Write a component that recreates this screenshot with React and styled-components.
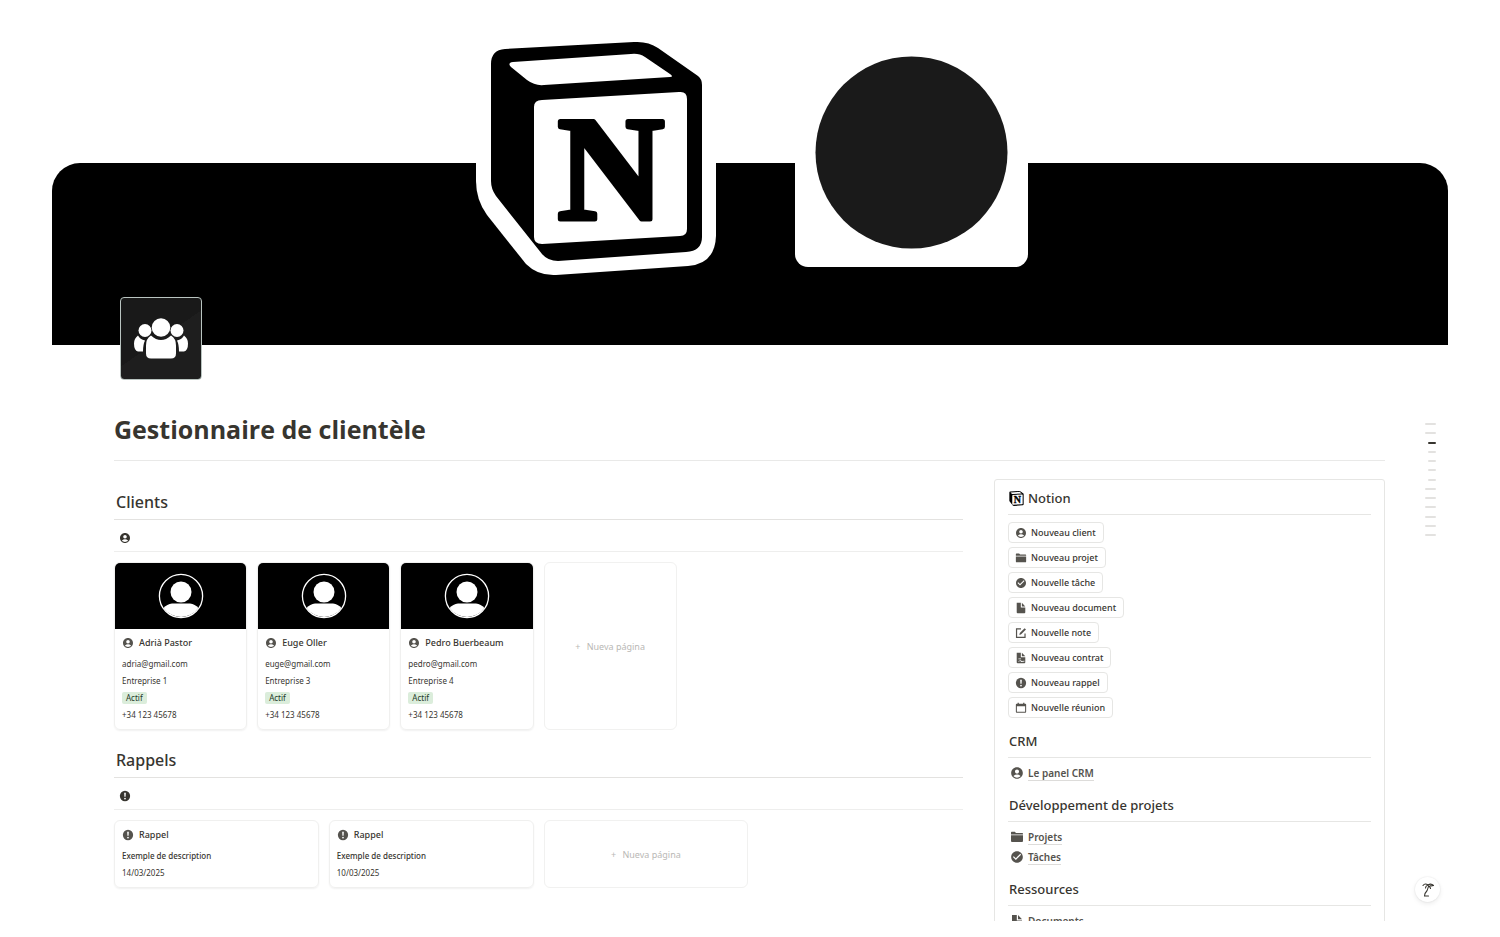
import React from "react";
import styled, { createGlobalStyle } from "styled-components";
import { MdAccountCircle, MdCheckCircle } from "react-icons/md";

const GlobalStyle = createGlobalStyle`
  * {
    box-sizing: border-box;
  }

  body {
    margin: 0;
    background: #fff;
    color: #37352f;
    font-family: "Noto Sans", "Open Sans", sans-serif;
  }

  h1, h2, h3, p {
    margin: 0;
  }
`;

const Page = styled.main`
  height: calc(100vh - 16px);
  min-height: 600px;
  overflow: hidden;
  padding: 163px 52px 0;
`;

const Cover = styled.header`
  height: 182px;
  padding-left: 4px;
  background: #000;
  border-radius: 28px 28px 0 0;
  display: flex;
  justify-content: center;
  align-items: flex-start;
  gap: 79px;

  > svg {
    flex: none;
    margin-top: -136px;
  }
`;

const Content = styled.div`
  padding: 0 63px 0 62px;
`;

const PageIcon = styled.div`
  position: relative;
  width: 82px;
  height: 83px;
  margin: -48px 0 0 6px;
  border: 1px solid #b9c4c0;
  border-radius: 4px;
  background: linear-gradient(145deg, #191919 50%, #1e1e1e 50%);

  svg {
    display: block;
  }
`;

const Title = styled.h1`
  margin-top: 29px;
  padding-bottom: 11px;
  border-bottom: 1px solid #e9e9e8;
  font-family: "Open Sans", sans-serif;
  font-size: 25px;
  font-weight: 700;
  line-height: 40px;
`;

const Columns = styled.div`
  display: grid;
  grid-template-columns: 849fr 391fr;
  gap: 31px;
  margin-top: 18px;
`;

const Section = styled.section`
  padding-top: 11px;

  & + & {
    padding-top: 18px;
  }
`;

const SectionTitle = styled.h2`
  padding: 0 2px 5px;
  border-bottom: 1px solid #e3e2e0;
  font-size: 16px;
  font-weight: 500;
  line-height: 24px;
`;

const ViewBar = styled.div`
  display: flex;
  align-items: center;
  height: 32px;
  padding: 5px 5px 0;
  border-bottom: 1px solid #eeeeed;
`;

const ViewTab = styled.button`
  display: flex;
  padding: 0;
  border: none;
  background: none;
  color: #37352f;
  font-size: 12px;
`;

const Gallery = styled.div`
  display: grid;
  grid-template-columns: repeat(
    auto-fill,
    minmax(${(props) => props.$min}px, 1fr)
  );
  gap: 10px;
  margin-top: 10px;
`;

const Card = styled.article`
  overflow: hidden;
  border: 1px solid #f0f0ef;
  border-radius: 6px;
  box-shadow: 0 1px 2px rgba(15, 15, 15, 0.06);
`;

const CardCover = styled.div`
  display: flex;
  justify-content: center;
  align-items: center;
  height: 67px;
  margin: -1px -1px 0;
  background: #000;
`;

const CardBody = styled.div`
  padding: 6px 7px;
`;

const CardTitle = styled.h3`
  display: flex;
  align-items: center;
  gap: 5px;
  margin-bottom: 4px;
  font-size: 9px;
  font-weight: 500;
  line-height: 16px;

  svg {
    flex: none;
    font-size: 12px;
    color: #55534e;
  }
`;

const Property = styled.p`
  font-size: 8px;
  line-height: 17px;
  font-weight: ${(props) => (props.$strong ? 500 : 400)};
  white-space: nowrap;
`;

const Tag = styled.span`
  display: inline-block;
  padding: 0 4px;
  border-radius: 2px;
  background: #dbeddb;
  color: #1c3829;
  line-height: 12px;
`;

const NewCard = styled.button`
  min-height: 67px;
  border: 1px solid #f1f1f0;
  border-radius: 6px;
  background: none;
  color: #b9b8b5;
  font-family: inherit;
  font-size: 9px;

  span {
    margin-right: 4px;
  }
`;

const Panel = styled.aside`
  padding: 6px 13px;
  border: 1px solid #e6e6e4;
  border-radius: 3px;
`;

const PanelTitle = styled.h2`
  display: flex;
  align-items: center;
  gap: 4px;
  margin-bottom: 5px;
  padding: 0 1px 4px;
  border-bottom: 1px solid #e6e6e4;
  font-size: 13px;
  font-weight: 500;
  line-height: 24px;
`;

const ActionList = styled.div`
  display: flex;
  flex-direction: column;
  align-items: flex-start;
  gap: 4px;
  margin-bottom: 11px;
  padding-top: 2px;
`;

const Action = styled.button`
  display: flex;
  align-items: center;
  gap: 4px;
  height: 21px;
  padding: 0 7px 0 6px;
  border: 1px solid #e6e6e4;
  border-radius: 4px;
  background: #fff;
  color: #37352f;
  font-family: inherit;
  font-size: 9px;
  font-weight: 500;

  svg {
    font-size: 12px;
    color: #55534e;
  }
`;

const LinkList = styled.div`
  margin-bottom: 10px;
`;

const PageLink = styled.a`
  display: flex;
  align-items: center;
  gap: 4px;
  height: 20px;
  padding-left: 2px;
  color: #55534e;
  font-size: 10px;
  font-weight: 600;
  line-height: 14px;
  text-decoration: none;

  svg {
    font-size: 14px;
  }

  span {
    border-bottom: 1px solid #dddcda;
  }
`;

const Outline = styled.nav`
  position: fixed;
  top: 423px;
  right: 64px;
  display: flex;
  flex-direction: column;
  align-items: flex-end;
  justify-content: space-between;
  height: 113px;
`;

const OutlineMark = styled.a`
  width: ${(props) => (props.$short ? 8 : 11)}px;
  height: 2px;
  border-radius: 1px;
  background: ${(props) => (props.$active ? "#37352f" : "#e3e2e0")};
`;

const HelpButton = styled.button`
  position: fixed;
  right: 60px;
  bottom: 35px;
  display: flex;
  align-items: center;
  justify-content: center;
  width: 25px;
  height: 25px;
  padding: 0;
  border: none;
  border-radius: 50%;
  background: #fff;
  box-shadow: 0 0 2px rgba(15, 15, 15, 0.12), 0 2px 5px rgba(15, 15, 15, 0.08);
`;

// `outlined` adds the thick white sticker edge around the cube
const NotionCube = ({ outlined }) => (
  <svg
    width={outlined ? 240 : 15}
    height={outlined ? 250 : 15}
    viewBox={outlined ? "0 0 240 250" : "14 14 213 221"}
    aria-hidden="true"
  >
    {outlined && (
      <path
        d="M0 136V35Q0 4 31 1L162 -8Q178 -9 191 0L226 25Q240 36 240 55V209Q239 237 212 239L80 248Q62 249 50 237L11 188Q0 173 0 154Z"
        fill="#fff"
      />
    )}
    <path
      d="M29 22L158 15Q172 14 182 21L222 49Q226 52 226 58V210Q226 224 210 225L82 234Q72 234 66 227L20 169Q15 162 15 154V37Q15 23 29 22Z"
      fill="#000"
    />
    <path
      d="M37 35L155 27Q163 26 169 30L194 47Q198 50 194 50L68 58Q59 59 51 53L35 40Q31 36 37 35Z"
      fill="#fff"
    />
    <path
      d="M66 73L203 65Q211 64 211 72V202Q211 209 204 209L66 217Q58 217 58 210V80Q58 73 66 73Z"
      fill="#fff"
    />
    <text
      x="135"
      y="192"
      textAnchor="middle"
      fontFamily="'Liberation Serif', serif"
      fontSize="148"
      fontWeight="700"
      stroke="#000"
      strokeWidth="5"
      strokeLinejoin="round"
    >
      N
    </text>
  </svg>
);

const CircleBadge = () => (
  <svg width="233" height="240" viewBox="0 0 233 240" aria-hidden="true">
    <rect width="233" height="240" rx="13" fill="#fff" />
    <circle cx="116.500" cy="125.500" r="96" fill="#1a1a1a" />
  </svg>
);

const TeamIcon = () => (
  <svg width="80" height="81" viewBox="0 0 80 80" fill="#fff">
    <circle cx="24" cy="32" r="6.5" />
    <circle cx="56" cy="32" r="6.5" />
    <path d="M17 37Q19 41 24 42Q22 46 22 53H17Q13 52 13 45Q13 40 17 37Z" />
    <path d="M63 37Q61 41 56 42Q58 46 58 53H63Q67 52 67 45Q67 40 63 37Z" />
    <circle cx="40" cy="29" r="9.3" />
    <path d="M30 37Q40 46 50 37Q55 40 55 47V55Q55 60 50 60H30Q25 60 25 55V47Q25 40 30 37Z" />
  </svg>
);

const Portrait = () => (
  <svg width="46" height="46" viewBox="0 0 46 46" fill="#fff">
    <circle cx="23" cy="23" r="21.6" fill="none" stroke="#fff" strokeWidth="1.3" />
    <circle cx="23" cy="19" r="10.5" />
    <path d="M5.500 35Q9 31 14 30.500H32Q37 31 40.500 35A21.600 21.600 0 0 1 5.500 35Z" />
  </svg>
);

const Glyph = ({ children }) => (
  <svg width="1em" height="1em" viewBox="0 0 14 14" fill="currentColor">
    {children}
  </svg>
);

const AlertIcon = () => (
  <Glyph>
    <circle cx="7" cy="7" r="6" />
    <path d="M6 3.200H8L7.700 8H6.300Z" fill="#fff" />
    <circle cx="7" cy="10" r="1" fill="#fff" />
  </Glyph>
);

const FolderIcon = () => (
  <Glyph>
    <path d="M1 2.500Q1 1.800 1.700 1.800H4.800L6 3H12.300Q13 3 13 3.700V4.500H1Z" />
    <path d="M1 5.200H13V11Q13 12 12 12H2Q1 12 1 11Z" />
  </Glyph>
);

const DocumentIcon = () => (
  <Glyph>
    <path d="M2 1H6.800V6.500H12V12Q12 13 11 13H3Q2 13 2 12Z" />
    <path d="M8 1L12 5.300H8Z" />
  </Glyph>
);

const ContractIcon = () => (
  <Glyph>
    <path
      fillRule="evenodd"
      d="M2 1H6.800V6H12V12Q12 13 11 13H3Q2 13 2 12ZM4 7.500V8.500H7V7.500ZM4 10.500V11.500L6 10.600L7.500 11.600L11 11V10.200L8 10.500L6.500 9.500Z"
    />
    <path d="M8 1L12 5H8Z" />
  </Glyph>
);

const NoteIcon = () => (
  <Glyph>
    <path
      d="M7 2.300H1.800V12.200H11.700V7.500"
      fill="none"
      stroke="currentColor"
      strokeWidth="1.4"
    />
    <path d="M5 9.300L5.600 7L11.200 1.400L12.800 3L7.200 8.600Z" />
  </Glyph>
);

const CalendarIcon = () => (
  <Glyph>
    <path
      fillRule="evenodd"
      d="M3 .8H4.500V2H9.500V.8H11V2H12Q13 2 13 3V11.500Q13 12.500 12 12.500H2Q1 12.500 1 11.500V3Q1 2 2 2H3ZM2.200 5V11.300H11.800V5Z"
    />
  </Glyph>
);

const PalmIcon = () => (
  <svg
    width="14"
    height="16"
    viewBox="0 0 14 16"
    fill="none"
    stroke="#37352f"
    strokeWidth="1.1"
    strokeLinecap="round"
    strokeLinejoin="round"
  >
    <path d="M2 3.500Q4 .8 7 3Q10 1 12.500 3.500Q11 4 9 3.800M7 3Q4.500 4 4.500 6M7.500 4Q9.500 5 9.500 6.500M7.500 4.500Q6.500 9 4 11.500L3.500 14H7.500" />
  </svg>
);

const clients = [
  { name: "Adrià Pastor", email: "adria@gmail.com", company: "Entreprise 1" },
  { name: "Euge Oller", email: "euge@gmail.com", company: "Entreprise 3" },
  { name: "Pedro Buerbeaum", email: "pedro@gmail.com", company: "Entreprise 4" },
];

const reminders = ["14/03/2025", "10/03/2025"];

const actions = [
  { label: "Nouveau client", icon: MdAccountCircle },
  { label: "Nouveau projet", icon: FolderIcon },
  { label: "Nouvelle tâche", icon: MdCheckCircle },
  { label: "Nouveau document", icon: DocumentIcon },
  { label: "Nouvelle note", icon: NoteIcon },
  { label: "Nouveau contrat", icon: ContractIcon },
  { label: "Nouveau rappel", icon: AlertIcon },
  { label: "Nouvelle réunion", icon: CalendarIcon },
];

const linkGroups = [
  { title: "CRM", links: [{ label: "Le panel CRM", icon: MdAccountCircle }] },
  {
    title: "Développement de projets",
    links: [
      { label: "Projets", icon: FolderIcon },
      { label: "Tâches", icon: MdCheckCircle },
    ],
  },
  { title: "Ressources", links: [{ label: "Documents", icon: DocumentIcon }] },
];

const outline = [0, 0, 1, 1, 1, 1, 1, 0, 0, 0, 0, 0, 0];

const NewPage = () => (
  <NewCard type="button">
    <span>+</span> Nueva página
  </NewCard>
);

const App = () => {
  return (
    <>
      <GlobalStyle />
      <Page>
        <Cover>
          <NotionCube outlined />
          <CircleBadge />
        </Cover>
        <Content>
          <PageIcon>
            <TeamIcon />
          </PageIcon>
          <Title>Gestionnaire de clientèle</Title>
          <Columns>
            <div>
              <Section>
                <SectionTitle>Clients</SectionTitle>
                <ViewBar>
                  <ViewTab type="button" aria-label="Clients">
                    <MdAccountCircle />
                  </ViewTab>
                </ViewBar>
                <Gallery $min={130}>
                  {clients.map((client) => (
                    <Card key={client.name}>
                      <CardCover>
                        <Portrait />
                      </CardCover>
                      <CardBody>
                        <CardTitle>
                          <MdAccountCircle />
                          {client.name}
                        </CardTitle>
                        <Property>{client.email}</Property>
                        <Property>{client.company}</Property>
                        <Property>
                          <Tag>Actif</Tag>
                        </Property>
                        <Property>+34 123 45678</Property>
                      </CardBody>
                    </Card>
                  ))}
                  <NewPage />
                </Gallery>
              </Section>
              <Section>
                <SectionTitle>Rappels</SectionTitle>
                <ViewBar>
                  <ViewTab type="button" aria-label="Rappels">
                    <AlertIcon />
                  </ViewTab>
                </ViewBar>
                <Gallery $min={200}>
                  {reminders.map((date) => (
                    <Card key={date}>
                      <CardBody>
                        <CardTitle>
                          <AlertIcon />
                          Rappel
                        </CardTitle>
                        <Property $strong>Exemple de description</Property>
                        <Property>{date}</Property>
                      </CardBody>
                    </Card>
                  ))}
                  <NewPage />
                </Gallery>
              </Section>
            </div>
            <Panel>
              <PanelTitle>
                <NotionCube />
                Notion
              </PanelTitle>
              <ActionList>
                {actions.map(({ label, icon: Icon }) => (
                  <Action key={label} type="button">
                    <Icon />
                    {label}
                  </Action>
                ))}
              </ActionList>
              {linkGroups.map((group) => (
                <React.Fragment key={group.title}>
                  <PanelTitle>{group.title}</PanelTitle>
                  <LinkList>
                    {group.links.map(({ label, icon: Icon }) => (
                      <PageLink key={label} href="#">
                        <Icon />
                        <span>{label}</span>
                      </PageLink>
                    ))}
                  </LinkList>
                </React.Fragment>
              ))}
            </Panel>
          </Columns>
        </Content>
      </Page>
      <Outline aria-label="Sommaire">
        {outline.map((short, index) => (
          <OutlineMark
            key={index}
            href="#"
            aria-label={`Section ${index + 1}`}
            $short={short === 1}
            $active={index === 2}
          />
        ))}
      </Outline>
      <HelpButton type="button" aria-label="Aide">
        <PalmIcon />
      </HelpButton>
    </>
  );
};

export default App;
